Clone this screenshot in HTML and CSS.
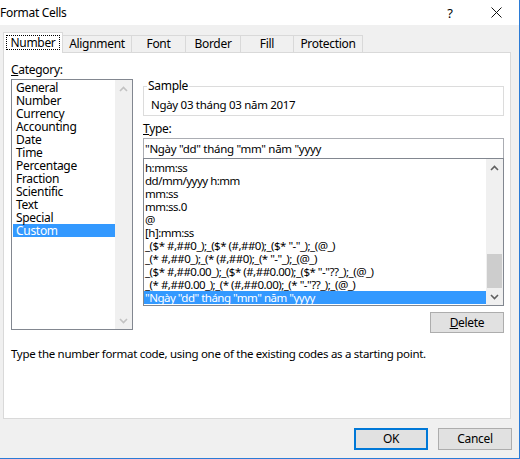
FILE: index.html
```html
<!DOCTYPE html>
<html>
<head>
<meta charset="utf-8">
<link rel="stylesheet" href="styles.css">
</head>
<body>
<div class="window">
  <div class="titlebar">
    <span class="title">Format Cells</span>
    <div class="tb-btn">?</div>
    <div class="tb-btn">
      <svg width="11" height="11" viewBox="0 0 11 11"><path d="M0.5 0.5 L10.5 10.5 M10.5 0.5 L0.5 10.5" stroke="#111" stroke-width="1" fill="none"/></svg>
    </div>
  </div>
  <div class="tabs">
    <div class="tab selected w-number"><span class="focus">Number</span></div>
    <div class="tab w-align">Alignment</div>
    <div class="tab w-font">Font</div>
    <div class="tab w-border">Border</div>
    <div class="tab w-fill">Fill</div>
    <div class="tab w-prot">Protection</div>
  </div>
  <div class="panel">
    <div class="columns">
      <div class="col-left">
        <div class="label"><u>C</u>ategory:</div>
        <div class="listbox cat">
          <div class="items">
            <div class="item">General</div>
            <div class="item">Number</div>
            <div class="item">Currency</div>
            <div class="item">Accounting</div>
            <div class="item">Date</div>
            <div class="item">Time</div>
            <div class="item">Percentage</div>
            <div class="item">Fraction</div>
            <div class="item">Scientific</div>
            <div class="item">Text</div>
            <div class="item">Special</div>
            <div class="item sel">Custom</div>
          </div>
          <div class="scrollbar disabled">
            <div class="sb-btn"><svg width="9" height="6" viewBox="0 0 9 6"><path d="M1 5 L4.5 1.5 L8 5" fill="none" stroke="#c2c2c2" stroke-width="1.6"/></svg></div>
            <div class="sb-track"></div>
            <div class="sb-btn"><svg width="9" height="6" viewBox="0 0 9 6"><path d="M1 1 L4.5 4.5 L8 1" fill="none" stroke="#c2c2c2" stroke-width="1.6"/></svg></div>
          </div>
        </div>
      </div>
      <div class="col-right">
        <fieldset class="sample">
          <legend>Sample</legend>
          <div class="sample-text">Ngày 03 tháng 03 năm 2017</div>
        </fieldset>
        <div class="label type-label"><u>T</u>ype:</div>
        <div class="input">"Ngày "dd" tháng "mm" năm "yyyy</div>
        <div class="listbox types">
          <div class="items">
            <div class="item">h:mm:ss</div>
            <div class="item">dd/mm/yyyy h:mm</div>
            <div class="item">mm:ss</div>
            <div class="item">mm:ss.0</div>
            <div class="item">@</div>
            <div class="item">[h]:mm:ss</div>
            <div class="item">_($* #,##0_);_($* (#,##0);_($* "-"_);_(@_)</div>
            <div class="item">_(* #,##0_);_(* (#,##0);_(* "-"_);_(@_)</div>
            <div class="item">_($* #,##0.00_);_($* (#,##0.00);_($* "-"??_);_(@_)</div>
            <div class="item">_(* #,##0.00_);_(* (#,##0.00);_(* "-"??_);_(@_)</div>
            <div class="item sel">"Ngày "dd" tháng "mm" năm "yyyy</div>
          </div>
          <div class="scrollbar">
            <div class="sb-btn"><svg width="9" height="6" viewBox="0 0 9 6"><path d="M1 5 L4.5 1.5 L8 5" fill="none" stroke="#606060" stroke-width="1.6"/></svg></div>
            <div class="sb-track"><div class="thumb"></div></div>
            <div class="sb-btn"><svg width="9" height="6" viewBox="0 0 9 6"><path d="M1 1 L4.5 4.5 L8 1" fill="none" stroke="#606060" stroke-width="1.6"/></svg></div>
          </div>
        </div>
        <div class="btn-row">
          <button class="btn"><u>D</u>elete</button>
        </div>
      </div>
    </div>
    <p class="desc">Type the number format code, using one of the existing codes as a starting point.</p>
  </div>
  <div class="footer">
    <button class="btn ok">OK</button>
    <button class="btn">Cancel</button>
  </div>
</div>
</body>
</html>
```
FILE: styles.css
```css
* { box-sizing: border-box; }
body {
  margin: 0;
  background: #f0f0f0;
  font-family: "Noto Sans", "Open Sans", sans-serif;
  font-size: 11.5px;
  letter-spacing: -0.3px;
  color: #000;
}
.window {
  width: 520px;
  height: 459px;
  border-right: 1px solid #2b7bd6;
  border-bottom: 1px solid #2b7bd6;
  display: flex;
  flex-direction: column;
  background: #f0f0f0;
}
.titlebar {
  height: 25px;
  background: #fff;
  display: flex;
  align-items: center;
}
.title {
  flex: 1;
  line-height: 25px;
  font-size: 12px;
}
.tb-btn {
  width: 46px;
  height: 25px;
  display: flex;
  align-items: center;
  justify-content: center;
  font-size: 13px;
}
.tabs {
  display: flex;
  align-items: flex-end;
  margin-top: 7px;
  padding-left: 3px;
  height: 20px;
  position: relative;
  z-index: 1;
}
.tab {
  height: 17px;
  border-top: 1px solid #d9d9d9;
  border-right: 1px solid #d9d9d9;
  background: #f0f0f0;
  display: flex;
  align-items: center;
  justify-content: center;
  line-height: 14px;
  padding-bottom: 1px;
  font-size: 12px;
}
.tab.selected {
  height: 21px;
  margin-bottom: -1px;
  border-left: 1px solid #d9d9d9;
  background: #fff;
  padding-bottom: 2px;
}
.focus {
  border: 1px dotted #000;
  padding: 0 3px;
  line-height: 13px;
}
.w-number { width: 60px; }
.w-align { width: 69px; }
.w-font { width: 54px; }
.w-border { width: 55px; }
.w-fill { width: 53px; }
.w-prot { width: 69px; }
.panel {
  margin-left: 3px;
  width: 508px;
  height: 367px;
  border: 1px solid #d9d9d9;
  background: #fff;
  padding: 0 6px 0 7px;
}
.columns {
  display: flex;
  gap: 10px;
}
.col-left {
  width: 122px;
  padding-top: 10px;
}
.col-right {
  width: 361px;
  padding-top: 26px;
}
.label {
  height: 14px;
  line-height: 14px;
  font-size: 12px;
}
.listbox {
  border: 1px solid #828790;
  display: flex;
  background: #fff;
}
.listbox.cat {
  margin-top: 2px;
  height: 251px;
}
.items {
  flex: 1;
  overflow: hidden;
}
.cat .items { padding-top: 1px; }
.item {
  height: 13px;
  line-height: 13px;
  white-space: nowrap;
}
.cat .item {
  margin-left: 1px;
  padding-left: 3px;
  font-size: 12px;
}
.item.sel {
  background: #3399ff;
  color: #fff;
}
.scrollbar {
  width: 17px;
  background: #f0f0f0;
  display: flex;
  flex-direction: column;
}
.sb-btn {
  height: 17px;
  display: flex;
  align-items: center;
  justify-content: center;
}
.sb-track {
  flex: 1;
  display: flex;
  flex-direction: column;
}
.thumb {
  margin-top: auto;
  height: 34px;
  margin-left: 1px;
  margin-right: 1px;
  background: #cdcdcd;
}
.sample {
  margin: 0;
  border: 1px solid #dcdcdc;
  padding: 5px 7px 3px;
  min-width: 0;
}
.sample legend {
  padding: 0 1px;
  margin-left: -4px;
  line-height: 14px;
  font-size: 12px;
}
.sample-text {
  line-height: 14px;
}
.type-label {
  margin-top: 6px;
}
.input {
  margin-top: 2px;
  height: 20px;
  border: 1px solid #abadb3;
  border-bottom: none;
  line-height: 19px;
  padding-left: 1px;
  white-space: nowrap;
}
.listbox.types {
  height: 148px;
}
.types .items { padding-top: 2px; }
.types .item {
  padding-left: 1px;
  letter-spacing: -0.5px;
}
.btn-row {
  display: flex;
  justify-content: flex-end;
  margin-top: 6px;
}
.btn {
  width: 74px;
  height: 21px;
  background: #e1e1e1;
  border: 1px solid #adadad;
  font-family: inherit;
  font-size: 12px;
  letter-spacing: -0.3px;
  color: #000;
  padding: 0;
  line-height: 18px;
}
.desc {
  margin: 14px 0 0;
  line-height: 14px;
}
.footer {
  display: flex;
  justify-content: flex-end;
  gap: 10px;
  margin-top: 9px;
  padding-right: 7px;
}
.footer .btn {
  height: 22px;
}
.btn.ok {
  border: 2px solid #0078d7;
}
```
